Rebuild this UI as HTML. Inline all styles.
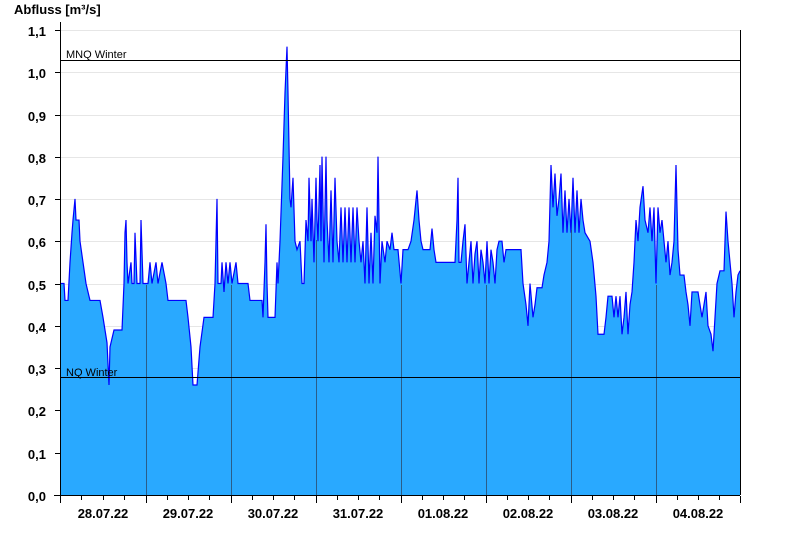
<!DOCTYPE html>
<html><head><meta charset="utf-8"><style>
html,body{margin:0;padding:0;background:#fff;width:800px;height:550px;overflow:hidden}
text{font-family:"Liberation Sans",Arial,sans-serif}
</style></head><body>
<svg width="800" height="550" viewBox="0 0 800 550" xmlns="http://www.w3.org/2000/svg">
<text x="14" y="14" font-size="13" font-weight="bold" fill="#000">Abfluss [m³/s]</text>
<g stroke="#e6e6e6" stroke-width="1">
<line x1="61" x2="740" y1="30.5" y2="30.5"/><line x1="61" x2="740" y1="72.5" y2="72.5"/>
<line x1="61" x2="740" y1="115.5" y2="115.5"/><line x1="61" x2="740" y1="157.5" y2="157.5"/>
<line x1="61" x2="740" y1="199.5" y2="199.5"/><line x1="61" x2="740" y1="241.5" y2="241.5"/>
<line x1="61" x2="740" y1="284.5" y2="284.5"/><line x1="61" x2="740" y1="326.5" y2="326.5"/>
<line x1="61" x2="740" y1="368.5" y2="368.5"/><line x1="61" x2="740" y1="410.5" y2="410.5"/>
<line x1="61" x2="740" y1="453.5" y2="453.5"/>
</g>
<g transform="translate(0,495) scale(1,-4.23)">
<polygon fill="#29a9ff" stroke="none" points="61,0 61,50 64,50 65,46 68,46 70,55 72,62 73,65 75,70 76,65 79,65 80,60 83,55 86,50 90,46 100,46 103,42 107,36 109,26 110,35 114,39 122,39 124,50 125,62 126,65 127,55 128,50 131,55 132,50 134,50 135,62 137,50 140,50 141,65 143,50 148,50 150,55 152,50 156,55 158,50 162,55 166,50 168,46 186,46 188,42 191,35 193,26 197,26 200,35 204,42 213,42 215,50 217,70 218,50 221,50 222,55 224,48 226,55 228,50 230,55 232,50 236,55 238,50 248,50 250,46 262,46 263,42 265,55 266,64 267,50 268,42 275,42 277,55 278,50 280,60 283,80 285,95 287,106 288,95 290,70 291,68 293,75 295,60 297,58 300,60 302,50 304,50 306,65 308,60 309,75 311,60 312,70 314,55 316,75 317,65 318,60 320,78 321,60 322,80 324,55 326,80 327,65 329,55 331,72 333,55 335,75 337,60 339,55 341,68 343,55 345,68 347,55 349,68 351,55 353,68 355,55 357,68 359,60 361,55 363,60 365,50 367,68 369,50 371,62 373,50 375,66 377,62 378,80 380,50 382,60 385,55 387,60 390,58 392,62 394,58 398,58 401,50 403,58 408,58 411,60 414,65 417,72 419,65 421,60 423,58 430,58 432,63 434,58 436,55 455,55 457,65 458,75 459,55 461,55 463,60 465,64 467,50 469,55 471,60 473,50 475,57 477,60 479,50 481,58 483,55 485,50 487,60 489,50 491,58 493,55 495,50 497,58 499,60 502,60 504,55 506,58 521,58 523,50 526,45 528,40 530,50 533,42 535,45 537,49 542,49 544,52 547,55 549,60 551,78 553,68 555,76 557,66 559,70 561,76 563,62 565,72 567,62 569,70 571,62 573,75 575,62 577,72 579,62 581,70 583,65 585,62 590,60 593,55 596,47 598,38 604,38 606,42 608,47 612,47 614,42 616,47 618,42 620,47 622,38 624,42 626,48 628,38 630,45 632,48 634,55 636,65 638,60 640,68 643,73 645,65 648,62 650,68 652,60 654,68 656,50 658,68 660,62 662,65 664,60 666,55 668,60 670,52 672,55 674,60 676,78 678,58 680,52 684,52 686,48 688,45 690,40 692,48 698,48 700,45 702,42 704,45 706,48 708,40 711,38 713,34 715,42 717,50 720,53 724,53 726,67 728,60 732,50 734,42 736,48 738,52 740,53 740,0"/>
<polyline fill="none" stroke="#0000ff" stroke-width="1.2" vector-effect="non-scaling-stroke" points="61,50 64,50 65,46 68,46 70,55 72,62 73,65 75,70 76,65 79,65 80,60 83,55 86,50 90,46 100,46 103,42 107,36 109,26 110,35 114,39 122,39 124,50 125,62 126,65 127,55 128,50 131,55 132,50 134,50 135,62 137,50 140,50 141,65 143,50 148,50 150,55 152,50 156,55 158,50 162,55 166,50 168,46 186,46 188,42 191,35 193,26 197,26 200,35 204,42 213,42 215,50 217,70 218,50 221,50 222,55 224,48 226,55 228,50 230,55 232,50 236,55 238,50 248,50 250,46 262,46 263,42 265,55 266,64 267,50 268,42 275,42 277,55 278,50 280,60 283,80 285,95 287,106 288,95 290,70 291,68 293,75 295,60 297,58 300,60 302,50 304,50 306,65 308,60 309,75 311,60 312,70 314,55 316,75 317,65 318,60 320,78 321,60 322,80 324,55 326,80 327,65 329,55 331,72 333,55 335,75 337,60 339,55 341,68 343,55 345,68 347,55 349,68 351,55 353,68 355,55 357,68 359,60 361,55 363,60 365,50 367,68 369,50 371,62 373,50 375,66 377,62 378,80 380,50 382,60 385,55 387,60 390,58 392,62 394,58 398,58 401,50 403,58 408,58 411,60 414,65 417,72 419,65 421,60 423,58 430,58 432,63 434,58 436,55 455,55 457,65 458,75 459,55 461,55 463,60 465,64 467,50 469,55 471,60 473,50 475,57 477,60 479,50 481,58 483,55 485,50 487,60 489,50 491,58 493,55 495,50 497,58 499,60 502,60 504,55 506,58 521,58 523,50 526,45 528,40 530,50 533,42 535,45 537,49 542,49 544,52 547,55 549,60 551,78 553,68 555,76 557,66 559,70 561,76 563,62 565,72 567,62 569,70 571,62 573,75 575,62 577,72 579,62 581,70 583,65 585,62 590,60 593,55 596,47 598,38 604,38 606,42 608,47 612,47 614,42 616,47 618,42 620,47 622,38 624,42 626,48 628,38 630,45 632,48 634,55 636,65 638,60 640,68 643,73 645,65 648,62 650,68 652,60 654,68 656,50 658,68 660,62 662,65 664,60 666,55 668,60 670,52 672,55 674,60 676,78 678,58 680,52 684,52 686,48 688,45 690,40 692,48 698,48 700,45 702,42 704,45 706,48 708,40 711,38 713,34 715,42 717,50 720,53 724,53 726,67 728,60 732,50 734,42 736,48 738,52 740,53"/>
</g>
<g stroke="#2a4a6a" stroke-opacity="0.8" stroke-width="1">
<line x1="146.5" x2="146.5" y1="285" y2="495"/><line x1="231.5" x2="231.5" y1="285" y2="495"/>
<line x1="316.5" x2="316.5" y1="240" y2="495"/><line x1="401.5" x2="401.5" y1="285" y2="495"/>
<line x1="486.5" x2="486.5" y1="285" y2="495"/><line x1="571.5" x2="571.5" y1="230" y2="495"/>
<line x1="656.5" x2="656.5" y1="285" y2="495"/>
</g>
<line x1="61" x2="740" y1="60.5" y2="60.5" stroke="#000"/>
<line x1="61" x2="740" y1="377.5" y2="377.5" stroke="#000"/>
<text x="66" y="58" font-size="11" fill="#000">MNQ Winter</text>
<text x="66" y="376" font-size="11" fill="#000">NQ Winter</text>
<line x1="740.5" x2="740.5" y1="30" y2="495" stroke="#000"/>
<g stroke="#000" stroke-width="1">
<line x1="60.5" x2="60.5" y1="22" y2="495"/>
<line x1="54" x2="740" y1="495.5" y2="495.5"/>
<line x1="55" x2="60" y1="30.5" y2="30.5"/><line x1="55" x2="60" y1="72.5" y2="72.5"/>
<line x1="55" x2="60" y1="115.5" y2="115.5"/><line x1="55" x2="60" y1="157.5" y2="157.5"/>
<line x1="55" x2="60" y1="199.5" y2="199.5"/><line x1="55" x2="60" y1="241.5" y2="241.5"/>
<line x1="55" x2="60" y1="284.5" y2="284.5"/><line x1="55" x2="60" y1="326.5" y2="326.5"/>
<line x1="55" x2="60" y1="368.5" y2="368.5"/><line x1="55" x2="60" y1="410.5" y2="410.5"/>
<line x1="55" x2="60" y1="453.5" y2="453.5"/>
<path d="M60.5 496v7M146.5 496v7M231.5 496v7M316.5 496v7M401.5 496v7M486.5 496v7M571.5 496v7M656.5 496v7M740.5 496v7"/>
<path d="M81.5 496v4M103.5 496v4M124.5 496v4M167.5 496v4M188.5 496v4M209.5 496v4M252.5 496v4M273.5 496v4M294.5 496v4M337.5 496v4M358.5 496v4M379.5 496v4M422.5 496v4M443.5 496v4M464.5 496v4M507.5 496v4M528.5 496v4M549.5 496v4M592.5 496v4M613.5 496v4M634.5 496v4M677.5 496v4M698.5 496v4M719.5 496v4"/>
</g>
<g font-size="13" font-weight="bold" fill="#000" text-anchor="end">
<text x="46" y="36">1,1</text><text x="46" y="78">1,0</text><text x="46" y="121">0,9</text>
<text x="46" y="163">0,8</text><text x="46" y="205">0,7</text><text x="46" y="247">0,6</text>
<text x="46" y="290">0,5</text><text x="46" y="332">0,4</text><text x="46" y="374">0,3</text>
<text x="46" y="416">0,2</text><text x="46" y="459">0,1</text><text x="46" y="501">0,0</text>
</g>
<g font-size="13" font-weight="bold" fill="#000" text-anchor="middle">
<text x="103" y="518">28.07.22</text><text x="188" y="518">29.07.22</text>
<text x="273" y="518">30.07.22</text><text x="358" y="518">31.07.22</text>
<text x="443" y="518">01.08.22</text><text x="528" y="518">02.08.22</text>
<text x="613" y="518">03.08.22</text><text x="698" y="518">04.08.22</text>
</g>
</svg>
</body></html>
